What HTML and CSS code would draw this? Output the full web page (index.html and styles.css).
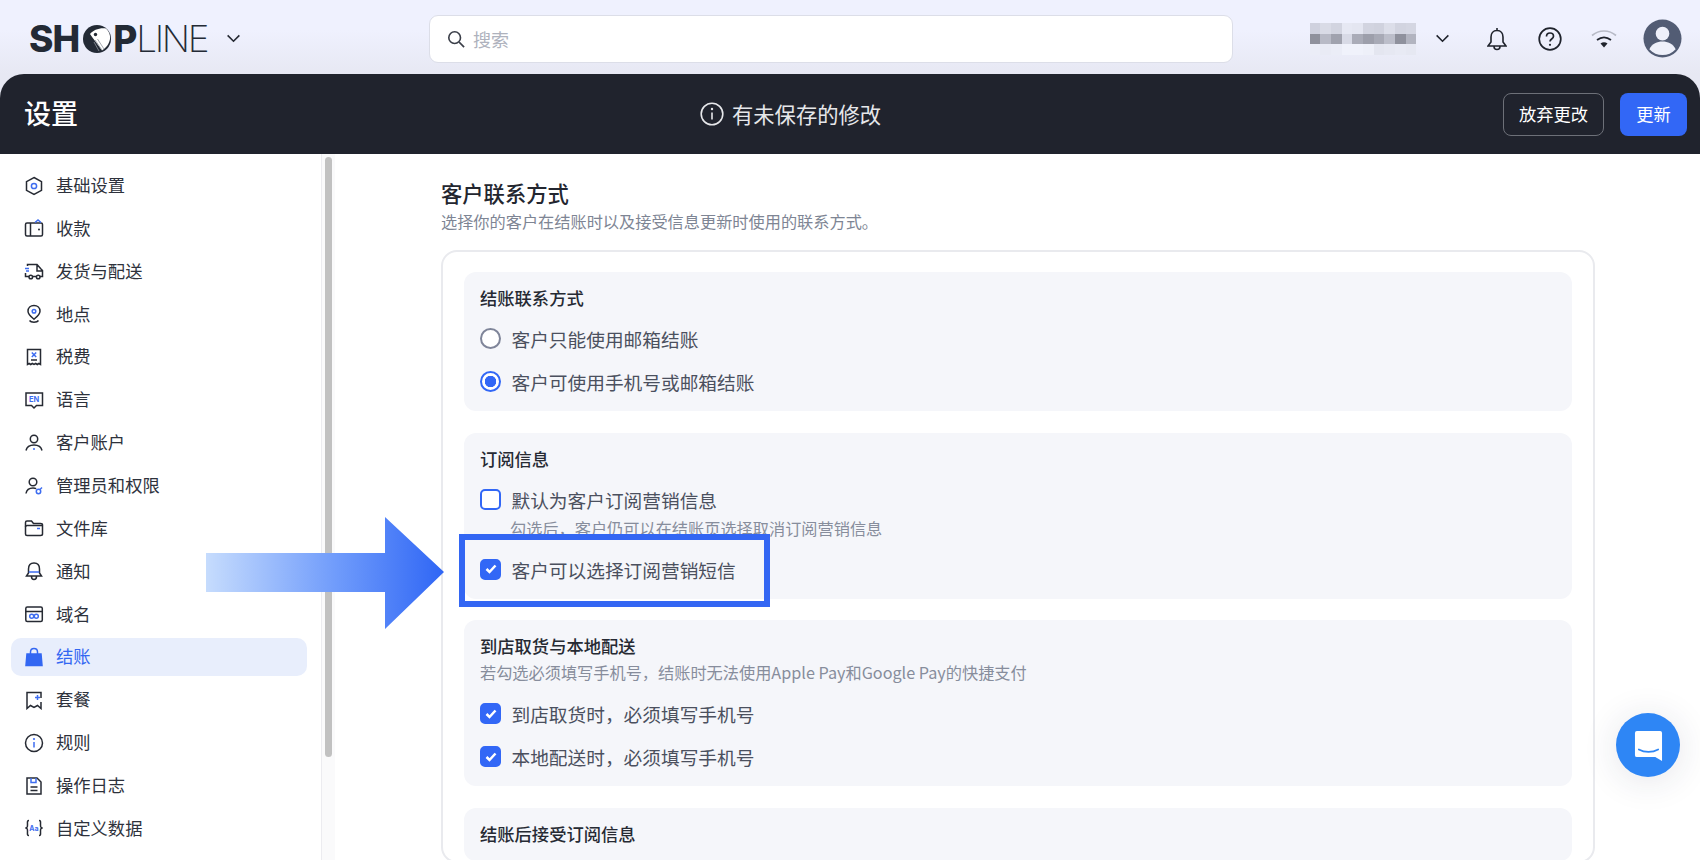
FILE: index.html
```html
<!DOCTYPE html>
<html lang="zh-CN">
<head>
    <meta charset="UTF-8">
    <meta name="viewport" content="width=device-width, initial-scale=1.0">
    <title>设置 - SHOPLINE</title>
    <link rel="stylesheet" href="styles.css">
</head>
<body>
    <header class="topbar">
        <div class="brand">
            <span class="logo"><b>SH</b><svg class="logo-o" viewBox="0 0 28 28"><circle cx="14" cy="14" r="14" fill="#232a35"/><path d="M7 9C10 5 17 2.500 23 3.500c3 2.500 4.500 6.500 4 10.500-.8 5-4 9-8 11.500C15 20 10.500 14 7 9z" fill="#fff"/><circle cx="12.500" cy="9.500" r="1.700" fill="#232a35"/><path d="M12 15l7 10M11 17l5 9M14.500 14l6.500 10" stroke="#8f959e" stroke-width=".8"/></svg><b>P</b><i>LINE</i></span>
            <svg class="caret" viewBox="0 0 16 10"><path d="M1.500 1.500L8 8l6.500-6.500"/></svg>
        </div>
        <div class="search">
            <svg class="search-ico" viewBox="0 0 20 20"><circle cx="8.500" cy="8.500" r="6.500"/><path d="M13.500 13.500L19 19"/></svg>
            <span>搜索</span>
        </div>
        <div class="top-right">
            <svg class="top-name" viewBox="0 0 10 3" shape-rendering="crispEdges">
                <rect x="0" y="0" width="1" height="1" fill="#cfd1de"/><rect x="1" y="0" width="1" height="1" fill="#d9dbe6"/><rect x="2" y="0" width="1" height="1" fill="#d2d4e0"/><rect x="3" y="0" width="1" height="1" fill="#e6e8f3"/><rect x="4" y="0" width="1" height="1" fill="#e4e6f1"/><rect x="5" y="0" width="1" height="1" fill="#d2d4e0"/><rect x="6" y="0" width="1" height="1" fill="#d0d2de"/><rect x="7" y="0" width="1" height="1" fill="#dcdee9"/><rect x="8" y="0" width="1" height="1" fill="#d2d4e0"/><rect x="9" y="0" width="1" height="1" fill="#d4d6e2"/>
                <rect x="0" y="1" width="1" height="1" fill="#8f919c"/><rect x="1" y="1" width="1" height="1" fill="#b8bac6"/><rect x="2" y="1" width="1" height="1" fill="#a0a2ae"/><rect x="3" y="1" width="1" height="1" fill="#d8dae6"/><rect x="4" y="1" width="1" height="1" fill="#aaacb8"/><rect x="5" y="1" width="1" height="1" fill="#9d9fab"/><rect x="6" y="1" width="1" height="1" fill="#a8aab6"/><rect x="7" y="1" width="1" height="1" fill="#bcbeca"/><rect x="8" y="1" width="1" height="1" fill="#8f919d"/><rect x="9" y="1" width="1" height="1" fill="#b2b4c0"/>
                <rect x="0" y="2" width="1" height="1" fill="#ebedf7"/><rect x="1" y="2" width="1" height="1" fill="#e9ebf5"/><rect x="2" y="2" width="1" height="1" fill="#ebedf7"/><rect x="3" y="2" width="1" height="1" fill="#f0f2fb"/><rect x="4" y="2" width="1" height="1" fill="#f0f2fb"/><rect x="5" y="2" width="1" height="1" fill="#eef0f9"/><rect x="6" y="2" width="1" height="1" fill="#e4e6f0"/><rect x="7" y="2" width="1" height="1" fill="#e6e8f2"/><rect x="8" y="2" width="1" height="1" fill="#e8eaf4"/><rect x="9" y="2" width="1" height="1" fill="#e6e8f2"/>
            </svg>
            <svg class="caret top-caret" viewBox="0 0 16 10"><path d="M1.500 1.500L8 8l6.500-6.500"/></svg>
            <svg class="top-bell" viewBox="0 0 20 24"><path d="M10 1v2.500M10 3.500c-4 0-6 3-6 6.500v5l-3 4h18l-3-4v-5c0-3.500-2-6.500-6-6.500zM7 19.500c0 2 1.300 3 3 3s3-1 3-3"/></svg>
            <svg class="top-help" viewBox="0 0 24 24"><circle cx="12" cy="12" r="10.800"/><path d="M8.500 9.500c0-2.200 1.600-3.500 3.500-3.500s3.500 1.300 3.500 3.200c0 2.800-3.500 2.800-3.500 5.300"/><circle class="dot" cx="12" cy="17.800" r="1.100"/></svg>
            <svg class="top-wifi" viewBox="0 0 26 19"><path class="wifi-far" d="M1 6.500C8 .500 18 .500 25 6.500"/><path d="M6 11c4.500-3.500 9.500-3.500 14 0"/><path class="dot" d="M9.500 14.500c2.300-1.600 4.700-1.600 7 0L13 18.500z"/></svg>
            <svg class="top-avatar" viewBox="0 0 40 40"><circle cx="20" cy="20" r="19.500" fill="#525c74"/><circle cx="20" cy="15" r="7" fill="#eef0fa"/><path d="M6.500 31c3-6 8-8 13.500-8s10.500 2 13.500 8C30 35 25 37 20 37S10 35 6.500 31z" fill="#eef0fa"/></svg>
        </div>
    </header>

    <div class="page-head">
        <h1>设置</h1>
        <div class="notice">
            <svg viewBox="0 0 24 24"><circle cx="12" cy="12" r="10.800"/><path d="M12 10.500v7"/><circle class="dot" cx="12" cy="7" r="1.200"/></svg>
            <span>有未保存的修改</span>
        </div>
        <div class="head-btns">
            <button class="btn-ghost">放弃更改</button>
            <button class="btn-primary">更新</button>
        </div>
    </div>

    <div class="layout">
        <aside class="sidebar">
            <nav class="side-nav">
                <a class="side-item"><svg class="ico" viewBox="0 0 20 20"><path d="M10 1.500l7.500 4.200v8.600L10 18.500l-7.500-4.200V5.700z"/><circle class="acc" cx="10" cy="10" r="2.600"/></svg><span>基础设置</span></a>
                <a class="side-item"><svg class="ico" viewBox="0 0 20 20"><rect x="1.500" y="5" width="17" height="13" rx="1.500"/><path d="M6.500 5v13"/><path class="acc" d="M11 4.500l3-2.500 3 2.500"/><circle class="dot" cx="15" cy="11.500" r="1"/></svg><span>收款</span></a>
                <a class="side-item"><svg class="ico" viewBox="0 0 20 20"><path d="M3.500 5V3.500h9.500l4 4.500 1.500 1.500v6h-2.500M5 15.500H1.500V12M9 15.500h3.500M13 3.500V10h5"/><circle cx="6.800" cy="16" r="1.800"/><circle cx="14.200" cy="16" r="1.800"/><path class="acc" d="M1 7.500h4M2 10h3"/></svg><span>发货与配送</span></a>
                <a class="side-item"><svg class="ico" viewBox="0 0 20 20"><path d="M10 1.500c3.500 0 6 2.500 6 5.700 0 3.300-3 5.600-6 8-3-2.400-6-4.700-6-8 0-3.200 2.500-5.700 6-5.700z"/><circle class="acc" cx="10" cy="7.300" r="1.800"/><path d="M5.500 16.500c1.500 2.400 7.500 2.400 9 0"/></svg><span>地点</span></a>
                <a class="side-item"><svg class="ico" viewBox="0 0 20 20"><path d="M3.500 2.500h13v15l-1.600-1-1.600 1-1.600-1-1.700 1-1.700-1-1.600 1-1.600-1-1.600 1z"/><path class="acc" d="M7.800 5.500l4.400 4.500M12.200 5.500L7.800 10"/><path d="M7 13h6"/></svg><span>税费</span></a>
                <a class="side-item"><svg class="ico" viewBox="0 0 20 20"><path d="M2 3h16.500v12.500h-6L10 18l-2.500-2.500H2z"/><text class="en-text" x="10.200" y="11.800">EN</text></svg><span>语言</span></a>
                <a class="side-item"><svg class="ico" viewBox="0 0 20 20"><circle cx="10" cy="6" r="3.700"/><path d="M2 17.500c.8-3.800 3.800-5.500 8-5.500s7.200 1.700 8 5.500"/><circle class="dot-acc" cx="10" cy="16" r="1"/></svg><span>客户账户</span></a>
                <a class="side-item"><svg class="ico" viewBox="0 0 20 20"><circle cx="9" cy="6" r="3.800"/><path d="M2 17.500c.6-3.800 3.500-5.500 7-5.500 1.200 0 2.300.2 3.200.6"/><circle class="acc" cx="14.500" cy="15.500" r="2.200"/><path class="acc" d="M16 13.500l2-2"/></svg><span>管理员和权限</span></a>
                <a class="side-item"><svg class="ico" viewBox="0 0 20 20"><path d="M1.500 16V4.500C1.500 3.500 2 3 3 3h4.500l2 2.500h7c1 0 2 .5 2 1.500v9c0 1-1 1.500-2 1.500H3c-1 0-1.500-.5-1.500-1.500z"/><path d="M1.500 9c0-1 .5-1.500 1.500-1.500h15.500"/><path class="acc" d="M13 10.500h3"/></svg><span>文件库</span></a>
                <a class="side-item"><svg class="ico" viewBox="0 0 20 20"><path d="M10 2c-3.500 0-5.500 2.500-5.500 6v4L2.500 15h15l-2-3V8c0-3.500-2-6-5.500-6zM7.500 15.500c0 2 1 3 2.500 3s2.500-1 2.500-3"/><path class="acc" d="M4.800 11h10.400"/></svg><span>通知</span></a>
                <a class="side-item"><svg class="ico" viewBox="0 0 20 20"><rect x="1.800" y="3" width="16.500" height="14.500" rx="1.500"/><path d="M1.800 7.500h16.500"/><circle class="acc" cx="7.700" cy="12.200" r="2"/><circle class="acc" cx="12.300" cy="12.200" r="2"/></svg><span>域名</span></a>
                <a class="side-item side-item-active"><svg class="ico" viewBox="0 0 20 20"><path class="bag" d="M3 7h14l1 11.500H2z"/><path class="bag-strap" d="M6.500 9V5c0-2 1.500-3.500 3.500-3.500S13.500 3 13.500 5v4"/></svg><span>结账</span></a>
                <a class="side-item"><svg class="ico" viewBox="0 0 20 20"><path d="M17 8V2.500H3v16l3.500-3 3.500 2 3.500-2 3.500 3V12"/><path class="acc" d="M11 7.500h5M13.500 5v5"/></svg><span>套餐</span></a>
                <a class="side-item"><svg class="ico" viewBox="0 0 20 20"><circle cx="10" cy="10" r="8.500"/><path class="acc" d="M10 9v5.500"/><circle class="dot-acc" cx="10" cy="6" r="1.100"/></svg><span>规则</span></a>
                <a class="side-item"><svg class="ico" viewBox="0 0 20 20"><path d="M3 2h10l4 4v12H3z"/><path class="acc" d="M7 2v4.500h5V2"/><path d="M6.500 11h7M6.500 14.500h7"/></svg><span>操作日志</span></a>
                <a class="side-item"><svg class="ico" viewBox="0 0 20 20"><path d="M5 2.500C3 2.500 3.500 4 3.500 6.500S3.500 9.500 1.500 10c2 .5 2 1 2 3.500S3 17.500 5 17.500M15 2.500c2 0 1.500 1.500 1.500 4s0 3 2 3.500c-2 .5-2 1-2 3.500s.5 4-1.500 4"/><text class="aa-text" x="10" y="12.500">Aa</text></svg><span>自定义数据</span></a>
            </nav>
            <div class="scroll-track"><div class="scroll-thumb"></div></div>
        </aside>

        <main class="main">
            <h2 class="main-title">客户联系方式</h2>
            <p class="main-sub">选择你的客户在结账时以及接受信息更新时使用的联系方式。</p>
            <section class="card">
                <div class="panel">
                    <h3>结账联系方式</h3>
                    <label class="opt"><span class="radio"></span>客户只能使用邮箱结账</label>
                    <label class="opt"><span class="radio radio-on"></span>客户可使用手机号或邮箱结账</label>
                </div>
                <div class="panel">
                    <h3>订阅信息</h3>
                    <label class="opt"><span class="check"></span>默认为客户订阅营销信息</label>
                    <p class="hint hint-under">勾选后，客户仍可以在结账页选择取消订阅营销信息</p>
                    <label class="opt"><span class="check check-on"><svg viewBox="0 0 12 10"><path d="M1.500 5l3 3 6-6.500"/></svg></span>客户可以选择订阅营销短信</label>
                </div>
                <div class="panel">
                    <h3>到店取货与本地配送</h3>
                    <p class="hint hint-top">若勾选必须填写手机号，结账时无法使用Apple Pay和Google Pay的快捷支付</p>
                    <label class="opt"><span class="check check-on"><svg viewBox="0 0 12 10"><path d="M1.500 5l3 3 6-6.500"/></svg></span>到店取货时，必须填写手机号</label>
                    <label class="opt"><span class="check check-on"><svg viewBox="0 0 12 10"><path d="M1.500 5l3 3 6-6.500"/></svg></span>本地配送时，必须填写手机号</label>
                </div>
                <div class="panel">
                    <h3>结账后接受订阅信息</h3>
                </div>
            </section>
        </main>
    </div>

    <!-- annotation on top of the screenshot -->
    <svg class="note-arrow" viewBox="0 0 240 112">
        <defs>
            <linearGradient id="arrowFill" x1="0" y1="0" x2="1" y2="0">
                <stop offset="0" stop-color="#c6dcfd"/>
                <stop offset="0.55" stop-color="#6f9bfb"/>
                <stop offset="1" stop-color="#2f66f5"/>
            </linearGradient>
        </defs>
        <polygon points="0,36 179,36 179,0 238,55 179,112 179,75 0,75" fill="url(#arrowFill)"/>
    </svg>
    <div class="note-box"></div>

    <div class="chat">
        <svg viewBox="0 0 30 33"><path d="M3 1h24a2 2 0 0 1 2 2v29l-7-4H3a2 2 0 0 1-2-2V3a2 2 0 0 1 2-2z" fill="#fff"/><path d="M5 20c6 3.500 14 3.500 20 0" fill="none" stroke="#2e86f5" stroke-width="1.800" stroke-linecap="round"/></svg>
    </div>
</body>
</html>
```

FILE: styles.css
```css
* { box-sizing: border-box; }
html, body { height: 100%; }
body {
    margin: 0;
    position: relative;
    display: flex;
    flex-direction: column;
    height: 860px;
    overflow: hidden;
    font-family: 'Noto Sans CJK SC', 'Inter', sans-serif;
    color: #262a33;
    background: linear-gradient(180deg, #eff1fe 0, #eff1fe 30px, #e7e8f3 74px, #e7e8f3 100px);
}
h1, h2, h3, p { margin: 0; font-weight: 500; }
svg { display: block; flex: none; }

/* top bar */
.topbar {
    flex: none;
    display: flex;
    align-items: center;
    height: 74px;
    padding: 4px 18px 0 29px;
}
.brand {
    display: flex;
    align-items: center;
    width: 400px;
    margin-top: -1px;
}
.logo {
    display: flex;
    align-items: center;
    width: 197px;
    font-family: 'Inter', sans-serif;
    font-size: 37px;
    line-height: 40px;
    letter-spacing: -1px;
    color: #232a35;
}
.logo b { font-weight: 800; }
.logo i { font-style: normal; font-weight: 200; letter-spacing: -2.400px; }
.logo-o { width: 28px; height: 28px; margin: 0 2px 0 4px; }
.caret {
    width: 15px;
    height: 9px;
    fill: none;
    stroke: #262a33;
    stroke-width: 1.800;
}
.search {
    display: flex;
    align-items: center;
    gap: 8px;
    width: 804px;
    height: 48px;
    padding-left: 17px;
    background: #fff;
    border: 1px solid #dcdee8;
    border-radius: 9px;
    font-size: 18px;
    color: #aeb2bd;
}
.search-ico {
    width: 18px;
    height: 18px;
    fill: none;
    stroke: #3a3e48;
    stroke-width: 1.800;
}
.top-right {
    display: flex;
    align-items: center;
    margin-left: auto;
    margin-top: -1px;
}
.top-right svg { fill: none; stroke: #1f232c; stroke-width: 1.700; }
.top-right .top-name { width: 108px; height: 32px; stroke: none; }
.top-right .top-caret { margin-left: 18px; }
.top-right .top-bell { width: 20px; height: 24px; margin-left: 37px; stroke-width: 1.600; }
.top-right .top-help { width: 24px; height: 24px; margin-left: 31px; }
.top-right .top-wifi { width: 26px; height: 19px; margin-left: 29px; }
.top-right .top-avatar { width: 39px; height: 39px; margin-left: 26px; stroke: none; }
.top-right .dot { fill: #1f232c; stroke: none; }
.top-right .wifi-far { stroke: #b7bac6; }

/* dark save bar */
.page-head {
    flex: none;
    display: flex;
    align-items: center;
    height: 80px;
    padding: 0 13px 0 24px;
    background: #20232d;
    border-radius: 24px 24px 0 0;
    color: #fff;
}
.page-head h1 { width: 54px; padding-bottom: 2px; font-size: 27px; line-height: 36px; }
.notice {
    display: flex;
    align-items: center;
    gap: 8px;
    margin-left: 622px;
    font-size: 21.300px;
    color: #e6e7ea;
}
.notice span { padding-bottom: 2px; }
.notice svg {
    width: 24px;
    height: 24px;
    fill: none;
    stroke: #e6e7ea;
    stroke-width: 1.600;
}
.notice .dot { fill: #e6e7ea; stroke: none; }
.head-btns { display: flex; gap: 16px; margin-left: auto; }
.head-btns button {
    height: 43px;
    padding: 0 0 2px;
    border-radius: 8px;
    font-family: inherit;
    font-size: 17.300px;
    color: #fff;
}
.btn-ghost { width: 101px; background: transparent; border: 1px solid #6d7078; }
.btn-primary { width: 67px; background: #3267f6; border: none; }

/* sidebar + content */
.layout {
    flex: 1;
    display: flex;
    min-height: 0;
    background: #fff;
}
.sidebar { flex: none; display: flex; width: 335px; }
.side-nav {
    flex: none;
    display: flex;
    flex-direction: column;
    gap: 4.870px;
    width: 321px;
    padding: 12.500px 14px 0 11px;
}
.side-item {
    flex: none;
    display: flex;
    align-items: center;
    gap: 12px;
    height: 38px;
    padding-left: 13px;
    border-radius: 10px;
    font-size: 17.300px;
    color: #2e323c;
}
.side-item span { padding-bottom: 2px; }
.side-item-active { background: #e8eefc; color: #3367f2; }
.ico {
    width: 20px;
    height: 20px;
    fill: none;
    stroke: #262a33;
    stroke-width: 1.500;
}
.ico .acc { stroke: #3e6df0; }
.ico .dot { fill: #262a33; stroke: none; }
.ico .dot-acc { fill: #3e6df0; stroke: none; }
.ico .bag { fill: #3367f2; stroke: #3367f2; }
.ico .bag-strap { stroke: #3367f2; }
.ico .en-text, .ico .aa-text {
    font-family: 'Inter', sans-serif;
    font-weight: 700;
    fill: #3e6df0;
    stroke: none;
    text-anchor: middle;
}
.ico .en-text { font-size: 7.500px; }
.ico .aa-text { font-size: 7px; }
.scroll-track {
    flex: 1;
    padding: 3px 3px 0;
    background: #fafafb;
    border-left: 1px solid #ececf0;
    border-right: 1px solid #e4e5ea;
}
.scroll-thumb {
    width: 7px;
    height: 600px;
    background: #c1c1c1;
    border-radius: 4px;
}
.main {
    flex: 1;
    min-width: 0;
    padding: 24px 106px 0;
    overflow: hidden;
    background: #fff;
}
.main-title { font-size: 21.300px; line-height: 30px; color: #23262f; }
.main-sub { margin-top: 1px; font-size: 16.200px; line-height: 24px; font-weight: 400; color: #7e8594; }
.card {
    display: flex;
    flex-direction: column;
    gap: 21.500px;
    width: 1154px;
    margin-top: 17px;
    padding: 20px 21px 0;
    background: #fff;
    border: 2px solid #e9eaee;
    border-radius: 16px;
}
.panel {
    padding: 14px 16px 8px;
    background: #f5f6fa;
    border-radius: 12px;
}
.panel h3 { margin-bottom: 7px; font-size: 17.300px; line-height: 24px; color: #262a33; }
.opt {
    display: flex;
    align-items: center;
    gap: 10.500px;
    height: 43px;
    font-size: 18.700px;
    color: #4b505e;
}
.radio {
    flex: none;
    width: 21px;
    height: 21px;
    background: #fff;
    border: 2.500px solid #7f8599;
    border-radius: 50%;
}
.radio-on {
    background: radial-gradient(circle, #3267f6 0, #3267f6 5.500px, #fff 6px);
    border-color: #3267f6;
}
.check {
    flex: none;
    display: flex;
    align-items: center;
    justify-content: center;
    width: 21px;
    height: 21px;
    background: #fff;
    border: 2.500px solid #3267f6;
    border-radius: 5px;
}
.check-on { background: #3267f6; }
.check svg {
    width: 12px;
    height: 10px;
    fill: none;
    stroke: #fff;
    stroke-width: 2.500;
}
.hint { font-size: 16.200px; line-height: 24px; font-weight: 400; color: #878d9c; }
.hint-under { margin: -5px 0 8px 30px; }
.panel h3:has(+ .hint-top) { margin-bottom: 2px; }
.hint-top { margin-bottom: 8px; }

/* annotation */
.note-arrow {
    position: absolute;
    left: 206px;
    top: 517px;
    width: 240px;
    height: 112px;
    filter: blur(0.6px);
}
.note-box {
    position: absolute;
    left: 459px;
    top: 534px;
    width: 311px;
    height: 73px;
    border: 6px solid #3366f3;
}
.chat {
    position: absolute;
    left: 1616px;
    top: 713px;
    display: flex;
    align-items: center;
    justify-content: center;
    width: 64px;
    height: 64px;
    background: #2e86f5;
    border-radius: 50%;
    box-shadow: 0 4px 36px rgba(30, 40, 70, 0.12);
}
.chat svg { width: 29px; height: 32px; margin-top: 1px; margin-left: 1px; }
```
